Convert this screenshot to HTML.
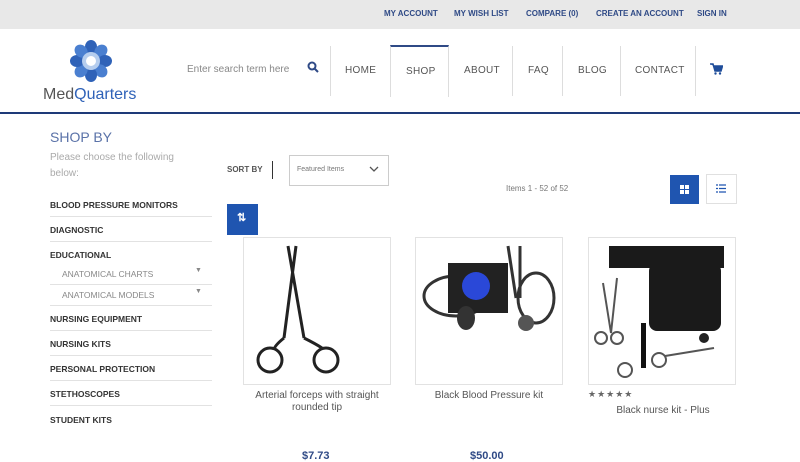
<!DOCTYPE html>
<html><head><meta charset="utf-8"><style>
*{margin:0;padding:0;box-sizing:border-box}
body{width:800px;height:459px;overflow:hidden;background:#fff;font-family:"Liberation Sans",sans-serif;position:relative}
.a{position:absolute;white-space:nowrap}
.top{position:absolute;left:0;top:0;width:800px;height:29px;background:#e8e8e8}
.tl{top:9px;font-size:8px;font-weight:bold;color:#2f4a86}
.nav{top:65px;font-size:10px;color:#555;letter-spacing:.3px}
.sep{position:absolute;top:46px;width:1px;height:50px;background:#ddd}
.cat{left:50px;font-size:8.5px;font-weight:bold;color:#333}
.sub{left:62px;font-size:8.5px;color:#888}
.ln{position:absolute;left:50px;width:162px;height:1px;background:#e2e2e2}
.card{position:absolute;top:237px;width:148px;height:148px;border:1px solid #e2e2e2;background:#fff}
.t{font-size:10px;color:#555;text-align:center}
</style></head><body>
<div class="top"></div>
<div class="a tl" style="left:384px">MY ACCOUNT</div>
<div class="a tl" style="left:454px">MY WISH LIST</div>
<div class="a tl" style="left:526px">COMPARE (0)</div>
<div class="a tl" style="left:596px">CREATE AN ACCOUNT</div>
<div class="a tl" style="left:697px">SIGN IN</div>

<svg class="a" style="left:66px;top:37px" width="50" height="48" viewBox="0 0 50 48">
<g transform="translate(25,24)">
<g fill="#2f62b8">
<ellipse cx="0" cy="-14" rx="6" ry="7"/>
<ellipse cx="0" cy="-14" rx="6" ry="7" transform="rotate(45)" fill="#4a7fd0"/>
<ellipse cx="0" cy="-14" rx="6" ry="7" transform="rotate(90)"/>
<ellipse cx="0" cy="-14" rx="6" ry="7" transform="rotate(135)" fill="#4a7fd0"/>
<ellipse cx="0" cy="-14" rx="6" ry="7" transform="rotate(180)"/>
<ellipse cx="0" cy="-14" rx="6" ry="7" transform="rotate(225)" fill="#4a7fd0"/>
<ellipse cx="0" cy="-14" rx="6" ry="7" transform="rotate(270)"/>
<ellipse cx="0" cy="-14" rx="6" ry="7" transform="rotate(315)" fill="#4a7fd0"/>
</g>
<circle r="9" fill="#b5cdee"/><circle r="5" fill="#fff"/>
</g></svg>
<div class="a" style="left:43px;top:86px;font-size:16px;color:#555">Med<span style="color:#2f62b8">Quarters</span></div>

<div class="a" style="left:187px;top:64px;font-size:10px;color:#888">Enter search term here</div>
<svg class="a" style="left:307px;top:61px" width="12" height="12" viewBox="0 0 12 12"><circle cx="5" cy="5" r="3.5" fill="none" stroke="#2f4a86" stroke-width="2"/><path d="M7.5 7.5L11 11" stroke="#2f4a86" stroke-width="2"/></svg>
<div class="sep" style="left:330px"></div>
<div class="a nav" style="left:345px">HOME</div>
<div class="a" style="left:390px;top:45px;width:59px;height:52px;border:1px solid #ddd;border-top:2px solid #2f4a86;border-bottom:none"></div>
<div class="a nav" style="left:406px;top:66px">SHOP</div>
<div class="a nav" style="left:464px">ABOUT</div>
<div class="sep" style="left:512px"></div>
<div class="a nav" style="left:528px">FAQ</div>
<div class="sep" style="left:562px"></div>
<div class="a nav" style="left:578px">BLOG</div>
<div class="sep" style="left:620px"></div>
<div class="a nav" style="left:635px">CONTACT</div>
<div class="sep" style="left:695px"></div>
<svg class="a" style="left:710px;top:63px" width="13" height="12" viewBox="0 0 13 12"><path d="M0 1h3l2 7h6l1.5-5H4" fill="#1f4d9a" stroke="#1f4d9a" stroke-width="1.5"/><circle cx="5.5" cy="10.5" r="1.2" fill="#1f4d9a"/><circle cx="10" cy="10.5" r="1.2" fill="#1f4d9a"/></svg>
<div class="a" style="left:0;top:112px;width:800px;height:2px;background:#1e3a78"></div>

<div class="a" style="left:50px;top:129px;font-size:14px;color:#5a72a8">SHOP BY</div>
<div class="a" style="left:50px;top:150px;font-size:10px;color:#aaa;line-height:16px">Please choose the following<br>below:</div>
<div class="a cat" style="top:200px">BLOOD PRESSURE MONITORS</div><div class="ln" style="top:216px"></div>
<div class="a cat" style="top:225px">DIAGNOSTIC</div><div class="ln" style="top:241px"></div>
<div class="a cat" style="top:250px">EDUCATIONAL</div>
<div class="a sub" style="top:269px">ANATOMICAL CHARTS</div><div class="a" style="left:195px;top:267px;font-size:7px;color:#888">▼</div><div class="ln" style="top:284px"></div>
<div class="a sub" style="top:290px">ANATOMICAL MODELS</div><div class="a" style="left:195px;top:288px;font-size:7px;color:#888">▼</div><div class="ln" style="top:305px"></div>
<div class="a cat" style="top:314px">NURSING EQUIPMENT</div><div class="ln" style="top:330px"></div>
<div class="a cat" style="top:339px">NURSING KITS</div><div class="ln" style="top:355px"></div>
<div class="a cat" style="top:364px">PERSONAL PROTECTION</div><div class="ln" style="top:380px"></div>
<div class="a cat" style="top:389px">STETHOSCOPES</div><div class="ln" style="top:405px"></div>
<div class="a cat" style="top:415px">STUDENT KITS</div>

<div class="a" style="left:227px;top:165px;font-size:8px;font-weight:bold;color:#555">SORT BY</div>
<div class="a" style="left:272px;top:161px;width:1px;height:18px;background:#333"></div>
<div class="a" style="left:289px;top:155px;width:100px;height:31px;border:1px solid #ccc"></div>
<div class="a" style="left:297px;top:166px;font-size:7px;color:#777">Featured Items</div>
<svg class="a" style="left:369px;top:166px" width="10" height="7"><path d="M1 1l4 4 4-4" fill="none" stroke="#555" stroke-width="1.3"/></svg>
<div class="a" style="left:506px;top:184px;font-size:8px;color:#777">Items 1 - 52 of 52</div>
<div class="a" style="left:670px;top:175px;width:29px;height:29px;background:#1f55b0"></div>
<svg class="a" style="left:680px;top:185px" width="9" height="9"><rect width="4" height="4" fill="#fff"/><rect x="5" width="4" height="4" fill="#fff"/><rect y="5" width="4" height="4" fill="#fff"/><rect x="5" y="5" width="4" height="4" fill="#fff"/></svg>
<div class="a" style="left:706px;top:174px;width:31px;height:30px;border:1px solid #e0e0e0"></div>
<svg class="a" style="left:716px;top:184px" width="10" height="9"><path d="M0 1h2M3 1h7M0 4.5h2M3 4.5h7M0 8h2M3 8h7" stroke="#1f55b0" stroke-width="1.2"/></svg>
<div class="a" style="left:227px;top:204px;width:31px;height:31px;background:#1f55b0"></div>
<div class="a" style="left:237px;top:211px;font-size:11px;font-weight:bold;color:#fff">⇅</div>

<div class="card" style="left:243px">
<svg width="146" height="146"><g fill="none" stroke="#222" stroke-width="3"><path d="M44 8 L60 100 M52 8 L40 100"/><circle cx="26" cy="122" r="12"/><circle cx="82" cy="122" r="12"/><path d="M40 100 Q30 108 30 112 M60 100 Q72 106 78 110"/></g></svg></div>
<div class="card" style="left:415px">
<svg width="146" height="146"><g fill="none" stroke="#333" stroke-width="3"><ellipse cx="40" cy="58" rx="32" ry="20"/><ellipse cx="120" cy="60" rx="18" ry="25"/><path d="M92 8 L100 60 M104 8 L104 60"/></g><rect x="32" y="25" width="60" height="50" fill="#222"/><circle cx="60" cy="48" r="14" fill="#2a48d8"/><ellipse cx="50" cy="80" rx="9" ry="12" fill="#333"/><circle cx="110" cy="85" r="8" fill="#555"/></svg></div>
<div class="card" style="left:588px">
<svg width="146" height="146"><rect x="20" y="8" width="115" height="22" fill="#1a1a1a"/><rect x="60" y="25" width="72" height="68" rx="8" fill="#1a1a1a"/><g fill="none" stroke="#555" stroke-width="2"><path d="M14 45 L22 95 M28 40 L22 95"/><circle cx="12" cy="100" r="6"/><circle cx="28" cy="100" r="6"/><circle cx="36" cy="132" r="7"/><circle cx="70" cy="122" r="7"/><path d="M76 118 L125 110"/></g><rect x="52" y="85" width="5" height="45" fill="#111"/><circle cx="115" cy="100" r="5" fill="#222"/></svg></div>

<div class="a t" style="left:243px;top:390px;width:148px;line-height:12px">Arterial forceps with straight<br>rounded tip</div>
<div class="a t" style="left:415px;top:390px;width:148px">Black Blood Pressure kit</div>
<div class="a" style="left:588px;top:389px;font-size:9px;color:#666;letter-spacing:1px">★★★★★</div>
<div class="a t" style="left:598px;top:405px;width:130px">Black nurse kit - Plus</div>
<div class="a" style="left:302px;top:450px;font-size:11px;font-weight:bold;color:#2f4a86">$7.73</div>
<div class="a" style="left:470px;top:450px;font-size:11px;font-weight:bold;color:#2f4a86">$50.00</div>
</body></html>
